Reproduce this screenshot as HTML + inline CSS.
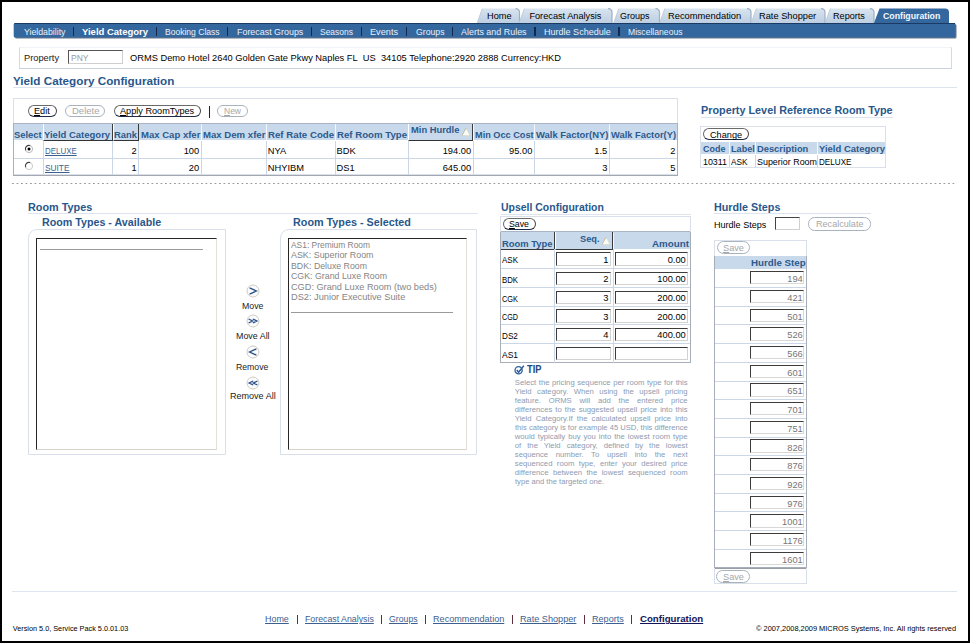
<!DOCTYPE html>
<html><head><meta charset="utf-8"><style>
html,body{margin:0;padding:0;width:970px;height:643px;overflow:hidden;background:#fff}
body{position:relative;font-family:"Liberation Sans",sans-serif}
.r{position:absolute}
.t{position:absolute;white-space:nowrap;transform-origin:0 0;}
</style></head><body>
<div class="r" style="left:0;top:0;width:970px;height:643px;background:#fff"></div>
<svg class="r" style="left:0;top:0" width="970" height="42" viewBox="0 0 970 42"><defs><linearGradient id="tg" x1="0" y1="0" x2="0" y2="1"><stop offset="0" stop-color="#d8e4f0"/><stop offset="1" stop-color="#bccee1"/></linearGradient></defs><path d="M477 23.5 L482.3 8.6 L515.5 8.6 Q519.5 8.6 519.5 12.6 L519.5 23.5 Z" fill="url(#tg)"/><path d="M515.5 8.6 Q519.5 8.6 519.5 12.6 L519.5 23.5" fill="none" stroke="#9fb0c2" stroke-width="1.2"/><path d="M477 23.5 L482.3 8.6" fill="none" stroke="#b6c5d5" stroke-width="0.8"/><path d="M519 23.5 L524.3 8.6 L608 8.6 Q612 8.6 612 12.6 L612 23.5 Z" fill="url(#tg)"/><path d="M608 8.6 Q612 8.6 612 12.6 L612 23.5" fill="none" stroke="#9fb0c2" stroke-width="1.2"/><path d="M519 23.5 L524.3 8.6" fill="none" stroke="#b6c5d5" stroke-width="0.8"/><path d="M613.5 23.5 L618.8 8.6 L655.5 8.6 Q659.5 8.6 659.5 12.6 L659.5 23.5 Z" fill="url(#tg)"/><path d="M655.5 8.6 Q659.5 8.6 659.5 12.6 L659.5 23.5" fill="none" stroke="#9fb0c2" stroke-width="1.2"/><path d="M613.5 23.5 L618.8 8.6" fill="none" stroke="#b6c5d5" stroke-width="0.8"/><path d="M659.5 23.5 L664.8 8.6 L747 8.6 Q751 8.6 751 12.6 L751 23.5 Z" fill="url(#tg)"/><path d="M747 8.6 Q751 8.6 751 12.6 L751 23.5" fill="none" stroke="#9fb0c2" stroke-width="1.2"/><path d="M659.5 23.5 L664.8 8.6" fill="none" stroke="#b6c5d5" stroke-width="0.8"/><path d="M751 23.5 L756.3 8.6 L821 8.6 Q825 8.6 825 12.6 L825 23.5 Z" fill="url(#tg)"/><path d="M821 8.6 Q825 8.6 825 12.6 L825 23.5" fill="none" stroke="#9fb0c2" stroke-width="1.2"/><path d="M751 23.5 L756.3 8.6" fill="none" stroke="#b6c5d5" stroke-width="0.8"/><path d="M825 23.5 L830.3 8.6 L870 8.6 Q874 8.6 874 12.6 L874 23.5 Z" fill="url(#tg)"/><path d="M870 8.6 Q874 8.6 874 12.6 L874 23.5" fill="none" stroke="#9fb0c2" stroke-width="1.2"/><path d="M825 23.5 L830.3 8.6" fill="none" stroke="#b6c5d5" stroke-width="0.8"/><path d="M874 23 L879.5 8.6 L945 8.6 Q949 8.6 949 12.6 L949 23 Z" fill="#35679f"/><rect x="15" y="24.2" width="941.5" height="14.3" rx="1.5" fill="#6a7688"/><rect x="13.7" y="23" width="941.8" height="14.6" rx="1.5" fill="#35679f"/><rect x="14.5" y="23" width="940.5" height="1" fill="#1b3a63"/></svg>
<div class="t" style="left:486.70px;top:11px;font-size:9.2px;line-height:10px;color:#000;transform:scale(1.0034,1.0);transform-origin:0 8px;">Home</div>
<div class="t" style="left:529.40px;top:11px;font-size:9.2px;line-height:10px;color:#000;">Forecast Analysis</div>
<div class="t" style="left:620.30px;top:11px;font-size:9.2px;line-height:10px;color:#000;transform:scale(0.9821,1.0);transform-origin:0 8px;">Groups</div>
<div class="t" style="left:667.80px;top:11px;font-size:9.2px;line-height:10px;color:#000;transform:scale(1.0164,1.0);transform-origin:0 8px;">Recommendation</div>
<div class="t" style="left:758.70px;top:11px;font-size:9.2px;line-height:10px;color:#000;transform:scale(1.0088,1.0);transform-origin:0 8px;">Rate Shopper</div>
<div class="t" style="left:833.30px;top:11px;font-size:9.2px;line-height:10px;color:#000;transform:scale(0.9915,1.0);transform-origin:0 8px;">Reports</div>
<div class="t" style="left:882.90px;top:11px;font-size:8.74px;line-height:10px;color:#f4f8ff;font-weight:bold;transform:scale(1.0009,1.0);transform-origin:0 8px;">Configuration</div>
<div class="t" style="left:23.60px;top:27px;font-size:9.3px;line-height:10px;color:#e9f0f8;transform:scale(0.9408,1.0);transform-origin:0 8px;">Yieldability</div>
<div class="t" style="left:81.80px;top:27px;font-size:9.3px;line-height:10px;color:#ffffff;font-weight:bold;transform:scale(1.0206,1.0);transform-origin:0 8px;">Yield Category</div>
<div class="t" style="left:165.40px;top:27px;font-size:9.3px;line-height:10px;color:#e9f0f8;transform:scale(0.9186,1.0);transform-origin:0 8px;">Booking Class</div>
<div class="t" style="left:236.70px;top:27px;font-size:9.3px;line-height:10px;color:#e9f0f8;transform:scale(0.9574,1.0);transform-origin:0 8px;">Forecast Groups</div>
<div class="t" style="left:320.30px;top:27px;font-size:9.3px;line-height:10px;color:#e9f0f8;transform:scale(0.9119,1.0);transform-origin:0 8px;">Seasons</div>
<div class="t" style="left:370.30px;top:27px;font-size:9.3px;line-height:10px;color:#e9f0f8;transform:scale(0.9852,1.0);transform-origin:0 8px;">Events</div>
<div class="t" style="left:415.60px;top:27px;font-size:9.3px;line-height:10px;color:#e9f0f8;transform:scale(0.9344,1.0);transform-origin:0 8px;">Groups</div>
<div class="t" style="left:461.10px;top:27px;font-size:9.3px;line-height:10px;color:#e9f0f8;transform:scale(0.9616,1.0);transform-origin:0 8px;">Alerts and Rules</div>
<div class="t" style="left:543.60px;top:27px;font-size:9.3px;line-height:10px;color:#e9f0f8;transform:scale(0.9716,1.0);transform-origin:0 8px;">Hurdle Schedule</div>
<div class="t" style="left:627.50px;top:27px;font-size:9.3px;line-height:10px;color:#e9f0f8;transform:scale(0.9250,1.0);transform-origin:0 8px;">Miscellaneous</div>
<div class="r" style="left:73.00px;top:27.30px;width:1.30px;height:8.80px;background:#13284a"></div>
<div class="r" style="left:156.20px;top:27.30px;width:1.30px;height:8.80px;background:#13284a"></div>
<div class="r" style="left:227.20px;top:27.30px;width:1.30px;height:8.80px;background:#13284a"></div>
<div class="r" style="left:311.10px;top:27.30px;width:1.30px;height:8.80px;background:#13284a"></div>
<div class="r" style="left:361.10px;top:27.30px;width:1.30px;height:8.80px;background:#13284a"></div>
<div class="r" style="left:406.10px;top:27.30px;width:1.30px;height:8.80px;background:#13284a"></div>
<div class="r" style="left:452.10px;top:27.30px;width:1.30px;height:8.80px;background:#13284a"></div>
<div class="r" style="left:534.30px;top:27.30px;width:1.30px;height:8.80px;background:#13284a"></div>
<div class="r" style="left:618.40px;top:27.30px;width:1.30px;height:8.80px;background:#13284a"></div>
<div class="r" style="left:18.50px;top:47.00px;width:933.00px;height:21.80px;border:1px solid #f0f3f7;border-left-color:#d3dae4;border-bottom-color:#cbd3df;border-right-color:#d3dae4;box-sizing:border-box"></div>
<div class="t" style="left:23.80px;top:53px;font-size:9.3px;line-height:10px;color:#222;transform:scale(0.9988,1.0);transform-origin:0 8px;">Property</div>
<div class="r" style="left:68.30px;top:50.30px;width:54.30px;height:13.40px;border:1px solid #cfcfcf;border-top:1.5px solid #555;border-left:1.5px solid #555;box-sizing:border-box;background:#fff"></div>
<div class="t" style="left:70.50px;top:53px;font-size:9.3px;line-height:10px;color:#9c9c9c;transform:scale(0.9150,1.0);transform-origin:0 8px;">PNY</div>
<div class="t" style="left:130.00px;top:53px;font-size:9.3px;line-height:10px;color:#000;transform:scale(0.9992,1.0);transform-origin:0 8px;">ORMS Demo Hotel 2640 Golden Gate Pkwy Naples FL&nbsp; US&nbsp; 34105 Telephone:2920 2888 Currency:HKD</div>
<div class="t" style="left:13.40px;top:75px;font-size:10.8px;line-height:12px;color:#29578b;font-weight:bold;transform:scale(1.0834,1.0);transform-origin:0 10px;">Yield Category Configuration</div>
<div class="r" style="left:13.00px;top:87.00px;width:944.00px;height:1.00px;background:#dde4ee"></div>
<div class="r" style="left:12.60px;top:98.30px;width:665.20px;height:77.20px;border:1px solid #d9e0ea;box-sizing:border-box"></div>
<div class="r" style="left:27.60px;top:104.50px;width:29.00px;height:12.30px;border:1px solid #6a6a6a;border-bottom:1.6px solid #1f2a44;border-right:1.1px solid #444;background:#fff;border-radius:6.1px;box-sizing:border-box"></div>
<div class="t" style="left:34.20px;top:106px;font-size:9.3px;line-height:10px;color:#000;transform:scale(0.9856,1.0);transform-origin:0 8px;"><u>E</u>dit</div>
<div class="r" style="left:65.20px;top:104.50px;width:40.30px;height:12.30px;border:1px solid #a9b3be;background:#fff;border-radius:6.1px;box-sizing:border-box"></div>
<div class="t" style="left:71.50px;top:106px;font-size:9.3px;line-height:10px;color:#a7a7a7;transform:scale(1.0233,1.0);transform-origin:0 8px;">Delete</div>
<div class="r" style="left:114.20px;top:104.60px;width:87.30px;height:12.60px;border:1px solid #6a6a6a;border-bottom:1.6px solid #1f2a44;border-right:1.1px solid #444;background:#fff;border-radius:6.3px;box-sizing:border-box"></div>
<div class="t" style="left:120.00px;top:106px;font-size:9.3px;line-height:10px;color:#000;transform:scale(0.9834,1.0);transform-origin:0 8px;"><u>A</u>pply RoomTypes</div>
<div class="r" style="left:208.70px;top:106.00px;width:1.10px;height:11.50px;background:#222"></div>
<div class="r" style="left:216.90px;top:104.50px;width:31.10px;height:12.30px;border:1px solid #a9b3be;background:#fff;border-radius:6.1px;box-sizing:border-box"></div>
<div class="t" style="left:224.00px;top:106px;font-size:9.3px;line-height:10px;color:#a7a7a7;transform:scale(0.9135,1.0);transform-origin:0 8px;"><u>N</u>ew</div>
<div class="r" style="left:12.60px;top:123.30px;width:665.20px;height:17.20px;background:#c9d9ec;border-top:1px solid #a9b5c5;box-sizing:border-box"></div>
<div class="r" style="left:42.50px;top:124.30px;width:1.00px;height:16.20px;background:#f4f7fb"></div>
<div class="r" style="left:111.90px;top:124.30px;width:1.00px;height:16.20px;background:#f4f7fb"></div>
<div class="r" style="left:138.40px;top:124.30px;width:1.00px;height:16.20px;background:#f4f7fb"></div>
<div class="r" style="left:201.00px;top:124.30px;width:1.00px;height:16.20px;background:#f4f7fb"></div>
<div class="r" style="left:265.80px;top:124.30px;width:1.00px;height:16.20px;background:#f4f7fb"></div>
<div class="r" style="left:334.50px;top:124.30px;width:1.00px;height:16.20px;background:#f4f7fb"></div>
<div class="r" style="left:407.50px;top:124.30px;width:1.00px;height:16.20px;background:#f4f7fb"></div>
<div class="r" style="left:473.10px;top:124.30px;width:1.00px;height:16.20px;background:#f4f7fb"></div>
<div class="r" style="left:533.70px;top:124.30px;width:1.00px;height:16.20px;background:#f4f7fb"></div>
<div class="r" style="left:608.60px;top:124.30px;width:1.00px;height:16.20px;background:#f4f7fb"></div>
<div class="r" style="left:43.00px;top:124.10px;width:69.60px;height:17.10px;border-right:1.3px solid #3a3a3a;border-bottom:1.2px solid #333;border-left:1px solid #fff;box-sizing:border-box"></div>
<div class="r" style="left:112.60px;top:124.10px;width:26.30px;height:17.10px;border-right:1.3px solid #3a3a3a;border-bottom:1.2px solid #333;border-left:1px solid #fff;box-sizing:border-box"></div>
<div class="r" style="left:408.00px;top:124.10px;width:65.40px;height:17.10px;border-right:1.3px solid #3a3a3a;border-bottom:1.2px solid #333;border-left:1px solid #fff;box-sizing:border-box"></div>
<div class="t" style="left:14.00px;top:129px;font-size:9.4px;line-height:11px;color:#2c5a8c;font-weight:bold;transform:scale(1.0027,1.0);transform-origin:0 9px;">Select</div>
<div class="t" style="left:44.30px;top:129px;font-size:9.4px;line-height:11px;color:#2c5a8c;font-weight:bold;transform:scale(1.0123,1.0);transform-origin:0 9px;">Yield Category</div>
<div class="t" style="left:114.10px;top:129px;font-size:9.4px;line-height:11px;color:#2c5a8c;font-weight:bold;transform:scale(1.0027,1.0);transform-origin:0 9px;">Rank</div>
<div class="t" style="left:140.80px;top:129px;font-size:9.4px;line-height:11px;color:#2c5a8c;font-weight:bold;transform:scale(1.0178,1.0);transform-origin:0 9px;">Max Cap xfer</div>
<div class="t" style="left:202.70px;top:129px;font-size:9.4px;line-height:11px;color:#2c5a8c;font-weight:bold;transform:scale(1.0235,1.0);transform-origin:0 9px;">Max Dem xfer</div>
<div class="t" style="left:267.80px;top:129px;font-size:9.4px;line-height:11px;color:#2c5a8c;font-weight:bold;transform:scale(1.0316,1.0);transform-origin:0 9px;">Ref Rate Code</div>
<div class="t" style="left:336.70px;top:129px;font-size:9.4px;line-height:11px;color:#2c5a8c;font-weight:bold;transform:scale(1.0299,1.0);transform-origin:0 9px;">Ref Room Type</div>
<div class="t" style="left:474.80px;top:129px;font-size:9.4px;line-height:11px;color:#2c5a8c;font-weight:bold;transform:scale(0.9782,1.0);transform-origin:0 9px;">Min Occ Cost</div>
<div class="t" style="left:536.00px;top:129px;font-size:9.4px;line-height:11px;color:#2c5a8c;font-weight:bold;transform:scale(1.0047,1.0);transform-origin:0 9px;">Walk Factor(NY)</div>
<div class="t" style="left:611.00px;top:129px;font-size:9.4px;line-height:11px;color:#2c5a8c;font-weight:bold;transform:scale(0.9955,1.0);transform-origin:0 9px;">Walk Factor(Y)</div>
<div class="t" style="left:410.80px;top:124px;font-size:9.4px;line-height:11px;color:#2c5a8c;font-weight:bold;transform:scale(0.9992,1.0);transform-origin:0 9px;">Min Hurdle</div>
<svg class="r" style="left:461.3px;top:127.2px" width="10" height="10" viewBox="0 0 10 10"><path d="M1 8.5 L5 1 L9 8.5 Z" fill="#fbfcf8" stroke="#d9dccb" stroke-width="0.8"/><path d="M1 8.5 L5 1" stroke="#b4b8a6" stroke-width="0.8"/></svg>
<div class="r" style="left:12.60px;top:157.90px;width:665.20px;height:1.00px;background:#cbd6e6"></div>
<div class="r" style="left:12.60px;top:174.70px;width:665.20px;height:1.00px;background:#cbd6e6"></div>
<div class="r" style="left:42.50px;top:140.50px;width:1.00px;height:34.60px;background:#cbd6e6"></div>
<div class="r" style="left:111.90px;top:140.50px;width:1.00px;height:34.60px;background:#cbd6e6"></div>
<div class="r" style="left:138.40px;top:140.50px;width:1.00px;height:34.60px;background:#cbd6e6"></div>
<div class="r" style="left:201.00px;top:140.50px;width:1.00px;height:34.60px;background:#cbd6e6"></div>
<div class="r" style="left:265.80px;top:140.50px;width:1.00px;height:34.60px;background:#cbd6e6"></div>
<div class="r" style="left:334.50px;top:140.50px;width:1.00px;height:34.60px;background:#cbd6e6"></div>
<div class="r" style="left:407.50px;top:140.50px;width:1.00px;height:34.60px;background:#cbd6e6"></div>
<div class="r" style="left:473.10px;top:140.50px;width:1.00px;height:34.60px;background:#cbd6e6"></div>
<div class="r" style="left:533.70px;top:140.50px;width:1.00px;height:34.60px;background:#cbd6e6"></div>
<div class="r" style="left:608.60px;top:140.50px;width:1.00px;height:34.60px;background:#cbd6e6"></div>
<div class="r" style="left:12.60px;top:123.30px;width:1.00px;height:52.30px;background:#a9b1bd"></div>
<div class="r" style="left:676.80px;top:123.30px;width:1.00px;height:52.30px;background:#a9b1bd"></div>
<div class="r" style="left:12.60px;top:174.70px;width:665.20px;height:1.00px;background:#a3a8b0"></div>
<svg class="r" style="left:23.5px;top:144.2px" width="10" height="10" viewBox="0 0 10 10"><circle cx="5" cy="5" r="3.6" fill="#fff" stroke="#b0b0b0" stroke-width="0.9"/><path d="M1.6 6.2 A3.6 3.6 0 0 1 6.2 1.6" stroke="#444" stroke-width="1.1" fill="none"/><circle cx="5" cy="5" r="1.5" fill="#000"/></svg>
<div class="t" style="left:45.00px;top:146px;font-size:9.3px;line-height:10px;color:#3d5f8f;text-decoration:underline;transform:scale(0.8521,1.0);transform-origin:0 8px;">DELUXE</div>
<div class="t" style="left:136.60px;top:146px;font-size:9.3px;line-height:10px;color:#000;margin-left:-5.17px;">2</div>
<div class="t" style="left:199.20px;top:146px;font-size:9.3px;line-height:10px;color:#000;margin-left:-15.52px;">100</div>
<div class="t" style="left:267.80px;top:146px;font-size:9.3px;line-height:10px;color:#000;">NYA</div>
<div class="t" style="left:336.50px;top:146px;font-size:9.3px;line-height:10px;color:#000;">BDK</div>
<div class="t" style="left:471.10px;top:146px;font-size:9.3px;line-height:10px;color:#000;margin-left:-28.44px;">194.00</div>
<div class="t" style="left:532.30px;top:146px;font-size:9.3px;line-height:10px;color:#000;margin-left:-23.27px;">95.00</div>
<div class="t" style="left:607.30px;top:146px;font-size:9.3px;line-height:10px;color:#000;margin-left:-12.94px;">1.5</div>
<div class="t" style="left:675.30px;top:146px;font-size:9.3px;line-height:10px;color:#000;margin-left:-5.17px;">2</div>
<svg class="r" style="left:23.5px;top:161.2px" width="10" height="10" viewBox="0 0 10 10"><circle cx="5" cy="5" r="3.6" fill="#fff" stroke="#c4c4c4" stroke-width="0.9"/><path d="M1.6 6.2 A3.6 3.6 0 0 1 6.2 1.6" stroke="#444" stroke-width="1.1" fill="none"/></svg>
<div class="t" style="left:45.00px;top:163px;font-size:9.3px;line-height:10px;color:#3d5f8f;text-decoration:underline;transform:scale(0.8945,1.0);transform-origin:0 8px;">SUITE</div>
<div class="t" style="left:136.60px;top:163px;font-size:9.3px;line-height:10px;color:#000;margin-left:-5.17px;">1</div>
<div class="t" style="left:199.20px;top:163px;font-size:9.3px;line-height:10px;color:#000;margin-left:-10.34px;">20</div>
<div class="t" style="left:267.80px;top:163px;font-size:9.3px;line-height:10px;color:#000;">NHYIBM</div>
<div class="t" style="left:336.50px;top:163px;font-size:9.3px;line-height:10px;color:#000;">DS1</div>
<div class="t" style="left:471.10px;top:163px;font-size:9.3px;line-height:10px;color:#000;margin-left:-28.44px;">645.00</div>
<div class="t" style="left:607.30px;top:163px;font-size:9.3px;line-height:10px;color:#000;margin-left:-5.17px;">3</div>
<div class="t" style="left:675.30px;top:163px;font-size:9.3px;line-height:10px;color:#000;margin-left:-5.17px;">5</div>
<div class="t" style="left:700.80px;top:104px;font-size:10.8px;line-height:12px;color:#29578b;font-weight:bold;transform:scale(1.0020,1.0);transform-origin:0 10px;">Property Level Reference Room Type</div>
<div class="r" style="left:700.50px;top:116.50px;width:192.00px;height:1.00px;background:#dde4ee"></div>
<div class="r" style="left:700.40px;top:126.40px;width:185.60px;height:41.20px;border:1px solid #d9e0ea;box-sizing:border-box"></div>
<div class="r" style="left:703.00px;top:127.90px;width:45.90px;height:12.60px;border:1px solid #6a6a6a;border-bottom:1.6px solid #1f2a44;border-right:1.1px solid #444;background:#fff;border-radius:6.3px;box-sizing:border-box"></div>
<div class="t" style="left:709.90px;top:130px;font-size:9.3px;line-height:10px;color:#000;transform:scale(0.9853,1.0);transform-origin:0 8px;">Change</div>
<div class="r" style="left:701.40px;top:142.20px;width:183.60px;height:12.30px;background:#c9d9ec"></div>
<div class="r" style="left:728.50px;top:142.20px;width:1.00px;height:12.30px;background:#f4f7fb"></div>
<div class="r" style="left:728.50px;top:154.50px;width:1.00px;height:12.60px;background:#cbd6e6"></div>
<div class="r" style="left:754.90px;top:142.20px;width:1.00px;height:12.30px;background:#f4f7fb"></div>
<div class="r" style="left:754.90px;top:154.50px;width:1.00px;height:12.60px;background:#cbd6e6"></div>
<div class="r" style="left:816.80px;top:142.20px;width:1.00px;height:12.30px;background:#f4f7fb"></div>
<div class="r" style="left:816.80px;top:154.50px;width:1.00px;height:12.60px;background:#cbd6e6"></div>
<div class="t" style="left:702.60px;top:143px;font-size:9.4px;line-height:11px;color:#2c5a8c;font-weight:bold;transform:scale(0.9557,1.0);transform-origin:0 9px;">Code</div>
<div class="t" style="left:730.70px;top:143px;font-size:9.4px;line-height:11px;color:#2c5a8c;font-weight:bold;transform:scale(0.9714,1.0);transform-origin:0 9px;">Label</div>
<div class="t" style="left:756.70px;top:143px;font-size:9.4px;line-height:11px;color:#2c5a8c;font-weight:bold;transform:scale(0.9946,1.0);transform-origin:0 9px;">Description</div>
<div class="t" style="left:818.80px;top:143px;font-size:9.4px;line-height:11px;color:#2c5a8c;font-weight:bold;transform:scale(1.0108,1.0);transform-origin:0 9px;">Yield Category</div>
<div class="t" style="left:702.60px;top:157px;font-size:9.3px;line-height:10px;color:#000;transform:scale(0.9534,1.0);transform-origin:0 8px;">10311</div>
<div class="t" style="left:730.70px;top:157px;font-size:9.3px;line-height:10px;color:#000;transform:scale(0.8866,1.0);transform-origin:0 8px;">ASK</div>
<div class="t" style="left:756.70px;top:157px;font-size:9.3px;line-height:10px;color:#000;transform:scale(0.9595,1.0);transform-origin:0 8px;">Superior Room</div>
<div class="t" style="left:818.80px;top:157px;font-size:9.3px;line-height:10px;color:#000;transform:scale(0.8736,1.0);transform-origin:0 8px;">DELUXE</div>
<div class="r" style="left:12.00px;top:183.00px;width:945.00px;height:1.20px;background-image:linear-gradient(to right,#9c9c9c 0 1.4px,transparent 1.4px);background-size:4.5px 1.2px"></div>
<div class="t" style="left:27.90px;top:201px;font-size:10.8px;line-height:12px;color:#29578b;font-weight:bold;transform:scale(1.0031,1.0);transform-origin:0 10px;">Room Types</div>
<div class="r" style="left:28.00px;top:213.20px;width:449.50px;height:1.00px;background:#dde4ee"></div>
<div class="t" style="left:41.50px;top:216px;font-size:10.8px;line-height:12px;color:#29578b;font-weight:bold;transform:scale(0.9908,1.0);transform-origin:0 10px;">Room Types - Available</div>
<div class="t" style="left:292.70px;top:216px;font-size:10.8px;line-height:12px;color:#29578b;font-weight:bold;transform:scale(0.9992,1.0);transform-origin:0 10px;">Room Types - Selected</div>
<div class="r" style="left:28.00px;top:229.20px;width:197.90px;height:226.00px;border:1px solid #d9e0ea;border-top-left-radius:9px;box-sizing:border-box"></div>
<div class="r" style="left:280.00px;top:229.20px;width:196.80px;height:226.00px;border:1px solid #d9e0ea;border-top-left-radius:9px;box-sizing:border-box"></div>
<div class="r" style="left:36.30px;top:237.80px;width:181.00px;height:212.10px;border:1.5px solid;border-color:#262626 #e2e0d8 #d6d3ca #262626;background:#fff;box-sizing:border-box"></div>
<div class="r" style="left:288.10px;top:237.80px;width:179.20px;height:212.10px;border:1.5px solid;border-color:#262626 #e2e0d8 #d6d3ca #262626;background:#fff;box-sizing:border-box"></div>
<div class="r" style="left:40.00px;top:249.00px;width:162.50px;height:1.20px;background:#9a9a9a"></div>
<div class="t" style="left:291.10px;top:240px;font-size:9.2px;line-height:10px;color:#858585;transform:scale(0.9154,1.0);transform-origin:0 8px;">AS1: Premium Room</div>
<div class="t" style="left:291.10px;top:250px;font-size:9.2px;line-height:10px;color:#858585;transform:scale(0.9674,1.0);transform-origin:0 8px;">ASK: Superior Room</div>
<div class="t" style="left:291.10px;top:261px;font-size:9.2px;line-height:10px;color:#858585;transform:scale(0.9541,1.0);transform-origin:0 8px;">BDK: Deluxe Room</div>
<div class="t" style="left:291.10px;top:271px;font-size:9.2px;line-height:10px;color:#858585;transform:scale(0.9591,1.0);transform-origin:0 8px;">CGK: Grand Luxe Room</div>
<div class="t" style="left:291.10px;top:282px;font-size:9.2px;line-height:10px;color:#858585;transform:scale(0.9983,1.0);transform-origin:0 8px;">CGD: Grand Luxe Room (two beds)</div>
<div class="t" style="left:291.10px;top:292px;font-size:9.2px;line-height:10px;color:#858585;transform:scale(1.0036,1.0);transform-origin:0 8px;">DS2: Junior Executive Suite</div>
<div class="r" style="left:290.90px;top:311.60px;width:162.30px;height:1.20px;background:#9a9a9a"></div>
<svg class="r" style="left:245.6px;top:283.8px" width="14" height="14" viewBox="0 0 14 14"><circle cx="7" cy="7" r="6" fill="#f9fbfd" stroke="#c9c7b6" stroke-width="0.9"/><path d="M3.6 3.9 L10.4 7 L3.6 10.1" fill="none" stroke="#2b4f86" stroke-width="1.35"/></svg>
<div class="t" style="left:241.90px;top:301px;font-size:9.2px;line-height:10px;color:#222;transform:scale(0.9524,1.05);transform-origin:0 8px;">Move</div>
<svg class="r" style="left:245.6px;top:314.2px" width="14" height="14" viewBox="0 0 14 14"><circle cx="7" cy="7" r="6" fill="#f9fbfd" stroke="#c9c7b6" stroke-width="0.9"/><path d="M2.6 5 L6.6 7 L2.6 9 M6.8 5 L10.8 7 L6.8 9" fill="none" stroke="#2b4f86" stroke-width="1.35"/></svg>
<div class="t" style="left:235.80px;top:331px;font-size:9.2px;line-height:10px;color:#222;transform:scale(0.9673,1.05);transform-origin:0 8px;">Move All</div>
<svg class="r" style="left:245.6px;top:345.3px" width="14" height="14" viewBox="0 0 14 14"><circle cx="7" cy="7" r="6" fill="#f9fbfd" stroke="#c9c7b6" stroke-width="0.9"/><path d="M10.4 3.9 L3.6 7 L10.4 10.1" fill="none" stroke="#2b4f86" stroke-width="1.35"/></svg>
<div class="t" style="left:236.45px;top:362px;font-size:9.2px;line-height:10px;color:#222;transform:scale(0.9439,1.05);transform-origin:0 8px;">Remove</div>
<svg class="r" style="left:245.6px;top:376.2px" width="14" height="14" viewBox="0 0 14 14"><circle cx="7" cy="7" r="6" fill="#f9fbfd" stroke="#c9c7b6" stroke-width="0.9"/><path d="M11.4 5 L7.4 7 L11.4 9 M7.2 5 L3.2 7 L7.2 9" fill="none" stroke="#2b4f86" stroke-width="1.35"/></svg>
<div class="t" style="left:229.75px;top:391px;font-size:9.2px;line-height:10px;color:#222;transform:scale(0.9835,1.05);transform-origin:0 8px;">Remove All</div>
<div class="t" style="left:500.80px;top:201px;font-size:10.8px;line-height:12px;color:#29578b;font-weight:bold;transform:scale(0.9692,1.0);transform-origin:0 10px;">Upsell Configuration</div>
<div class="r" style="left:500.50px;top:213.60px;width:190.00px;height:1.00px;background:#dde4ee"></div>
<div class="r" style="left:500.40px;top:216.20px;width:190.20px;height:146.40px;border:1px solid #d9e0ea;box-sizing:border-box"></div>
<div class="r" style="left:500.40px;top:231.80px;width:190.20px;height:130.80px;border:1px solid #a6aeba;border-top:none;box-sizing:border-box"></div>
<div class="r" style="left:502.60px;top:217.70px;width:33.30px;height:12.40px;border:1px solid #6a6a6a;border-bottom:1.6px solid #1f2a44;border-right:1.1px solid #444;background:#fff;border-radius:6.2px;box-sizing:border-box"></div>
<div class="t" style="left:509.00px;top:219px;font-size:9.3px;line-height:10px;color:#000;transform:scale(0.9433,1.0);transform-origin:0 8px;"><u>S</u>ave</div>
<div class="r" style="left:501.40px;top:231.40px;width:188.20px;height:18.00px;background:#c9d9ec;border-top:1px solid #a9b5c5;box-sizing:border-box"></div>
<div class="r" style="left:554.20px;top:232.80px;width:1.00px;height:16.30px;background:#f4f7fb"></div>
<div class="r" style="left:613.00px;top:232.80px;width:1.00px;height:16.30px;background:#f4f7fb"></div>
<div class="r" style="left:501.40px;top:232.40px;width:53.40px;height:17.40px;border-right:1.3px solid #3a3a3a;border-bottom:1.3px solid #3a3a3a;box-sizing:border-box"></div>
<div class="r" style="left:554.80px;top:232.40px;width:58.60px;height:17.40px;border-right:1.3px solid #3a3a3a;border-bottom:1.3px solid #3a3a3a;border-left:1px solid #fff;box-sizing:border-box"></div>
<div class="t" style="left:502.00px;top:238px;font-size:9.4px;line-height:11px;color:#2c5a8c;font-weight:bold;transform:scale(1.0028,1.0);transform-origin:0 9px;">Room Type</div>
<div class="t" style="left:579.80px;top:233px;font-size:9.4px;line-height:11px;color:#2c5a8c;font-weight:bold;transform:scale(0.9842,1.0);transform-origin:0 9px;">Seq.</div>
<svg class="r" style="left:600.5px;top:235.5px" width="10" height="10" viewBox="0 0 10 10"><path d="M1 8.5 L5 1 L9 8.5 Z" fill="#fbfcf8" stroke="#d9dccb" stroke-width="0.8"/><path d="M1 8.5 L5 1" stroke="#b4b8a6" stroke-width="0.8"/></svg>
<div class="t" style="left:652.20px;top:238px;font-size:9.4px;line-height:11px;color:#2c5a8c;font-weight:bold;transform:scale(1.0446,1.0);transform-origin:0 9px;">Amount</div>
<div class="r" style="left:501.40px;top:268.00px;width:188.20px;height:1.00px;background:#cbd6e6"></div>
<div class="r" style="left:554.20px;top:249.10px;width:1.00px;height:19.40px;background:#cbd6e6"></div>
<div class="r" style="left:613.00px;top:249.10px;width:1.00px;height:19.40px;background:#cbd6e6"></div>
<div class="t" style="left:501.90px;top:255px;font-size:9.3px;line-height:10px;color:#000;transform:scale(0.8598,1.0);transform-origin:0 8px;">ASK</div>
<div class="r" style="left:556.20px;top:252.30px;width:54.60px;height:13.50px;border:1px solid #d2d2d2;border-top:1.6px solid #3c3c3c;border-left:1.6px solid #3c3c3c;box-sizing:border-box;background:#fff"></div>
<div class="t" style="left:608.50px;top:255px;font-size:9.3px;line-height:10px;color:#000;margin-left:-5.17px;">1</div>
<div class="r" style="left:614.90px;top:252.30px;width:73.20px;height:13.50px;border:1px solid #d2d2d2;border-top:1.6px solid #3c3c3c;border-left:1.6px solid #3c3c3c;box-sizing:border-box;background:#fff"></div>
<div class="t" style="left:685.80px;top:255px;font-size:9.3px;line-height:10px;color:#000;margin-left:-18.11px;">0.00</div>
<div class="r" style="left:501.40px;top:287.00px;width:188.20px;height:1.00px;background:#cbd6e6"></div>
<div class="r" style="left:554.20px;top:268.50px;width:1.00px;height:19.00px;background:#cbd6e6"></div>
<div class="r" style="left:613.00px;top:268.50px;width:1.00px;height:19.00px;background:#cbd6e6"></div>
<div class="t" style="left:501.90px;top:275px;font-size:9.3px;line-height:10px;color:#000;transform:scale(0.8366,1.0);transform-origin:0 8px;">BDK</div>
<div class="r" style="left:556.20px;top:271.70px;width:54.60px;height:13.50px;border:1px solid #d2d2d2;border-top:1.6px solid #3c3c3c;border-left:1.6px solid #3c3c3c;box-sizing:border-box;background:#fff"></div>
<div class="t" style="left:608.50px;top:274px;font-size:9.3px;line-height:10px;color:#000;margin-left:-5.17px;">2</div>
<div class="r" style="left:614.90px;top:271.70px;width:73.20px;height:13.50px;border:1px solid #d2d2d2;border-top:1.6px solid #3c3c3c;border-left:1.6px solid #3c3c3c;box-sizing:border-box;background:#fff"></div>
<div class="t" style="left:685.80px;top:274px;font-size:9.3px;line-height:10px;color:#000;margin-left:-28.44px;">100.00</div>
<div class="r" style="left:501.40px;top:305.60px;width:188.20px;height:1.00px;background:#cbd6e6"></div>
<div class="r" style="left:554.20px;top:287.50px;width:1.00px;height:18.60px;background:#cbd6e6"></div>
<div class="r" style="left:613.00px;top:287.50px;width:1.00px;height:18.60px;background:#cbd6e6"></div>
<div class="t" style="left:501.90px;top:294px;font-size:9.3px;line-height:10px;color:#000;transform:scale(0.7938,1.0);transform-origin:0 8px;">CGK</div>
<div class="r" style="left:556.20px;top:290.70px;width:54.60px;height:13.50px;border:1px solid #d2d2d2;border-top:1.6px solid #3c3c3c;border-left:1.6px solid #3c3c3c;box-sizing:border-box;background:#fff"></div>
<div class="t" style="left:608.50px;top:293px;font-size:9.3px;line-height:10px;color:#000;margin-left:-5.17px;">3</div>
<div class="r" style="left:614.90px;top:290.70px;width:73.20px;height:13.50px;border:1px solid #d2d2d2;border-top:1.6px solid #3c3c3c;border-left:1.6px solid #3c3c3c;box-sizing:border-box;background:#fff"></div>
<div class="t" style="left:685.80px;top:293px;font-size:9.3px;line-height:10px;color:#000;margin-left:-28.44px;">200.00</div>
<div class="r" style="left:501.40px;top:324.00px;width:188.20px;height:1.00px;background:#cbd6e6"></div>
<div class="r" style="left:554.20px;top:306.10px;width:1.00px;height:18.40px;background:#cbd6e6"></div>
<div class="r" style="left:613.00px;top:306.10px;width:1.00px;height:18.40px;background:#cbd6e6"></div>
<div class="t" style="left:501.90px;top:312px;font-size:9.3px;line-height:10px;color:#000;transform:scale(0.7740,1.0);transform-origin:0 8px;">CGD</div>
<div class="r" style="left:556.20px;top:309.30px;width:54.60px;height:13.50px;border:1px solid #d2d2d2;border-top:1.6px solid #3c3c3c;border-left:1.6px solid #3c3c3c;box-sizing:border-box;background:#fff"></div>
<div class="t" style="left:608.50px;top:312px;font-size:9.3px;line-height:10px;color:#000;margin-left:-5.17px;">3</div>
<div class="r" style="left:614.90px;top:309.30px;width:73.20px;height:13.50px;border:1px solid #d2d2d2;border-top:1.6px solid #3c3c3c;border-left:1.6px solid #3c3c3c;box-sizing:border-box;background:#fff"></div>
<div class="t" style="left:685.80px;top:312px;font-size:9.3px;line-height:10px;color:#000;margin-left:-28.44px;">200.00</div>
<div class="r" style="left:501.40px;top:343.00px;width:188.20px;height:1.00px;background:#cbd6e6"></div>
<div class="r" style="left:554.20px;top:324.50px;width:1.00px;height:19.00px;background:#cbd6e6"></div>
<div class="r" style="left:613.00px;top:324.50px;width:1.00px;height:19.00px;background:#cbd6e6"></div>
<div class="t" style="left:501.90px;top:331px;font-size:9.3px;line-height:10px;color:#000;transform:scale(0.8788,1.0);transform-origin:0 8px;">DS2</div>
<div class="r" style="left:556.20px;top:327.70px;width:54.60px;height:13.50px;border:1px solid #d2d2d2;border-top:1.6px solid #3c3c3c;border-left:1.6px solid #3c3c3c;box-sizing:border-box;background:#fff"></div>
<div class="t" style="left:608.50px;top:330px;font-size:9.3px;line-height:10px;color:#000;margin-left:-5.17px;">4</div>
<div class="r" style="left:614.90px;top:327.70px;width:73.20px;height:13.50px;border:1px solid #d2d2d2;border-top:1.6px solid #3c3c3c;border-left:1.6px solid #3c3c3c;box-sizing:border-box;background:#fff"></div>
<div class="t" style="left:685.80px;top:330px;font-size:9.3px;line-height:10px;color:#000;margin-left:-28.44px;">400.00</div>
<div class="r" style="left:554.20px;top:343.50px;width:1.00px;height:19.00px;background:#cbd6e6"></div>
<div class="r" style="left:613.00px;top:343.50px;width:1.00px;height:19.00px;background:#cbd6e6"></div>
<div class="t" style="left:501.90px;top:350px;font-size:9.3px;line-height:10px;color:#000;transform:scale(0.9102,1.0);transform-origin:0 8px;">AS1</div>
<div class="r" style="left:556.20px;top:346.70px;width:54.60px;height:13.50px;border:1px solid #d2d2d2;border-top:1.6px solid #3c3c3c;border-left:1.6px solid #3c3c3c;box-sizing:border-box;background:#fff"></div>
<div class="r" style="left:614.90px;top:346.70px;width:73.20px;height:13.50px;border:1px solid #d2d2d2;border-top:1.6px solid #3c3c3c;border-left:1.6px solid #3c3c3c;box-sizing:border-box;background:#fff"></div>
<svg class="r" style="left:514px;top:364.5px" width="11" height="10" viewBox="0 0 11 10"><circle cx="4.6" cy="5.2" r="3.6" fill="none" stroke="#2f5f9a" stroke-width="1.3"/><path d="M2.8 5 L4.6 7.2 L9.8 0.8" fill="none" stroke="#2f5f9a" stroke-width="1.5"/></svg>
<div class="t" style="left:526.60px;top:364px;font-size:10.0px;line-height:11px;color:#224878;font-weight:bold;transform:scale(0.9253,1.0);transform-origin:0 9px;">TIP</div>
<div class="t" style="left:514.80px;top:378px;font-size:7.7px;line-height:9px;color:#8d9bb0;word-spacing:0.448px;">Select the pricing sequence per room type for this</div>
<div class="t" style="left:514.80px;top:387px;font-size:7.7px;line-height:9px;color:#8d9bb0;word-spacing:3.373px;">Yield category. When using the upsell pricing</div>
<div class="t" style="left:514.80px;top:396px;font-size:7.7px;line-height:9px;color:#8d9bb0;word-spacing:5.654px;">feature. ORMS will add the entered price</div>
<div class="t" style="left:514.80px;top:405px;font-size:7.7px;line-height:9px;color:#8d9bb0;word-spacing:0.956px;">differences to the suggested upsell price into this</div>
<div class="t" style="left:514.80px;top:414px;font-size:7.7px;line-height:9px;color:#8d9bb0;word-spacing:1.948px;">Yield Category.If the calculated upsell price into</div>
<div class="t" style="left:514.80px;top:423px;font-size:7.7px;line-height:9px;color:#8d9bb0;transform:scale(0.9895,1.0);transform-origin:0 7px;">this category is for example 45 USD, this difference</div>
<div class="t" style="left:514.80px;top:432px;font-size:7.7px;line-height:9px;color:#8d9bb0;word-spacing:0.821px;">would typically buy you into the lowest room type</div>
<div class="t" style="left:514.80px;top:441px;font-size:7.7px;line-height:9px;color:#8d9bb0;word-spacing:3.887px;">of the Yield category, defined by the lowest</div>
<div class="t" style="left:514.80px;top:450px;font-size:7.7px;line-height:9px;color:#8d9bb0;word-spacing:5.532px;">sequence number. To upsell into the next</div>
<div class="t" style="left:514.80px;top:459px;font-size:7.7px;line-height:9px;color:#8d9bb0;word-spacing:2.305px;">sequenced room type, enter your desired price</div>
<div class="t" style="left:514.80px;top:468px;font-size:7.7px;line-height:9px;color:#8d9bb0;word-spacing:2.363px;">difference between the lowest sequenced room</div>
<div class="t" style="left:514.80px;top:477px;font-size:7.7px;line-height:9px;color:#8d9bb0;transform:scale(0.9915,1.0);transform-origin:0 7px;">type and the targeted one.</div>
<div class="t" style="left:714.30px;top:201px;font-size:10.8px;line-height:12px;color:#29578b;font-weight:bold;transform:scale(0.9969,1.0);transform-origin:0 10px;">Hurdle Steps</div>
<div class="r" style="left:714.30px;top:213.30px;width:157.00px;height:1.00px;background:#dde4ee"></div>
<div class="t" style="left:713.90px;top:220px;font-size:9.3px;line-height:10px;color:#000;transform:scale(0.9730,1.0);transform-origin:0 8px;">Hurdle Steps</div>
<div class="r" style="left:775.10px;top:216.90px;width:24.90px;height:13.40px;border:1px solid #cfcfcf;border-top:1.5px solid #444;border-left:1.5px solid #444;box-sizing:border-box;background:#fff"></div>
<div class="r" style="left:808.00px;top:217.30px;width:62.50px;height:13.30px;border:1px solid #a9b3be;background:#fff;border-radius:6.6px;box-sizing:border-box"></div>
<div class="t" style="left:815.50px;top:219px;font-size:9.3px;line-height:10px;color:#a7a7a7;transform:scale(0.9778,1.0);transform-origin:0 8px;">Recalculate</div>
<div class="r" style="left:714.30px;top:240.10px;width:93.00px;height:344.20px;border:1px solid #d9e0ea;box-sizing:border-box"></div>
<div class="r" style="left:716.50px;top:241.40px;width:33.00px;height:13.00px;border:1px solid #a9b3be;background:#fff;border-radius:6.5px;box-sizing:border-box"></div>
<div class="t" style="left:722.50px;top:243px;font-size:9.3px;line-height:10px;color:#a7a7a7;transform:scale(0.9904,1.0);transform-origin:0 8px;"><u>S</u>ave</div>
<div class="r" style="left:715.30px;top:255.90px;width:91.00px;height:13.00px;background:#c9d9ec"></div>
<div class="t" style="left:751.40px;top:257px;font-size:9.4px;line-height:11px;color:#2c5a8c;font-weight:bold;transform:scale(1.0394,1.0);transform-origin:0 9px;">Hurdle Step</div>
<div class="r" style="left:715.30px;top:287.00px;width:91.00px;height:1.00px;background:#cbd6e6"></div>
<div class="r" style="left:750.20px;top:271.10px;width:54.10px;height:13.40px;border:1px solid #d8d8d8;border-top:1.6px solid #3c3c3c;border-left:1.6px solid #3c3c3c;box-sizing:border-box;background:#fff"></div>
<div class="t" style="left:802.80px;top:274px;font-size:9.3px;line-height:10px;color:#767676;margin-left:-15.52px;">194</div>
<div class="r" style="left:715.30px;top:305.70px;width:91.00px;height:1.00px;background:#cbd6e6"></div>
<div class="r" style="left:750.20px;top:289.80px;width:54.10px;height:13.40px;border:1px solid #d8d8d8;border-top:1.6px solid #3c3c3c;border-left:1.6px solid #3c3c3c;box-sizing:border-box;background:#fff"></div>
<div class="t" style="left:802.80px;top:293px;font-size:9.3px;line-height:10px;color:#767676;margin-left:-15.52px;">421</div>
<div class="r" style="left:715.30px;top:324.40px;width:91.00px;height:1.00px;background:#cbd6e6"></div>
<div class="r" style="left:750.20px;top:308.50px;width:54.10px;height:13.40px;border:1px solid #d8d8d8;border-top:1.6px solid #3c3c3c;border-left:1.6px solid #3c3c3c;box-sizing:border-box;background:#fff"></div>
<div class="t" style="left:802.80px;top:312px;font-size:9.3px;line-height:10px;color:#767676;margin-left:-15.52px;">501</div>
<div class="r" style="left:715.30px;top:343.10px;width:91.00px;height:1.00px;background:#cbd6e6"></div>
<div class="r" style="left:750.20px;top:327.20px;width:54.10px;height:13.40px;border:1px solid #d8d8d8;border-top:1.6px solid #3c3c3c;border-left:1.6px solid #3c3c3c;box-sizing:border-box;background:#fff"></div>
<div class="t" style="left:802.80px;top:330px;font-size:9.3px;line-height:10px;color:#767676;margin-left:-15.52px;">526</div>
<div class="r" style="left:715.30px;top:361.80px;width:91.00px;height:1.00px;background:#cbd6e6"></div>
<div class="r" style="left:750.20px;top:345.90px;width:54.10px;height:13.40px;border:1px solid #d8d8d8;border-top:1.6px solid #3c3c3c;border-left:1.6px solid #3c3c3c;box-sizing:border-box;background:#fff"></div>
<div class="t" style="left:802.80px;top:349px;font-size:9.3px;line-height:10px;color:#767676;margin-left:-15.52px;">566</div>
<div class="r" style="left:715.30px;top:380.50px;width:91.00px;height:1.00px;background:#cbd6e6"></div>
<div class="r" style="left:750.20px;top:364.60px;width:54.10px;height:13.40px;border:1px solid #d8d8d8;border-top:1.6px solid #3c3c3c;border-left:1.6px solid #3c3c3c;box-sizing:border-box;background:#fff"></div>
<div class="t" style="left:802.80px;top:368px;font-size:9.3px;line-height:10px;color:#767676;margin-left:-15.52px;">601</div>
<div class="r" style="left:715.30px;top:399.20px;width:91.00px;height:1.00px;background:#cbd6e6"></div>
<div class="r" style="left:750.20px;top:383.30px;width:54.10px;height:13.40px;border:1px solid #d8d8d8;border-top:1.6px solid #3c3c3c;border-left:1.6px solid #3c3c3c;box-sizing:border-box;background:#fff"></div>
<div class="t" style="left:802.80px;top:386px;font-size:9.3px;line-height:10px;color:#767676;margin-left:-15.52px;">651</div>
<div class="r" style="left:715.30px;top:417.90px;width:91.00px;height:1.00px;background:#cbd6e6"></div>
<div class="r" style="left:750.20px;top:402.00px;width:54.10px;height:13.40px;border:1px solid #d8d8d8;border-top:1.6px solid #3c3c3c;border-left:1.6px solid #3c3c3c;box-sizing:border-box;background:#fff"></div>
<div class="t" style="left:802.80px;top:405px;font-size:9.3px;line-height:10px;color:#767676;margin-left:-15.52px;">701</div>
<div class="r" style="left:715.30px;top:436.60px;width:91.00px;height:1.00px;background:#cbd6e6"></div>
<div class="r" style="left:750.20px;top:420.70px;width:54.10px;height:13.40px;border:1px solid #d8d8d8;border-top:1.6px solid #3c3c3c;border-left:1.6px solid #3c3c3c;box-sizing:border-box;background:#fff"></div>
<div class="t" style="left:802.80px;top:424px;font-size:9.3px;line-height:10px;color:#767676;margin-left:-15.52px;">751</div>
<div class="r" style="left:715.30px;top:455.30px;width:91.00px;height:1.00px;background:#cbd6e6"></div>
<div class="r" style="left:750.20px;top:439.40px;width:54.10px;height:13.40px;border:1px solid #d8d8d8;border-top:1.6px solid #3c3c3c;border-left:1.6px solid #3c3c3c;box-sizing:border-box;background:#fff"></div>
<div class="t" style="left:802.80px;top:443px;font-size:9.3px;line-height:10px;color:#767676;margin-left:-15.52px;">826</div>
<div class="r" style="left:715.30px;top:474.00px;width:91.00px;height:1.00px;background:#cbd6e6"></div>
<div class="r" style="left:750.20px;top:458.10px;width:54.10px;height:13.40px;border:1px solid #d8d8d8;border-top:1.6px solid #3c3c3c;border-left:1.6px solid #3c3c3c;box-sizing:border-box;background:#fff"></div>
<div class="t" style="left:802.80px;top:461px;font-size:9.3px;line-height:10px;color:#767676;margin-left:-15.52px;">876</div>
<div class="r" style="left:715.30px;top:492.70px;width:91.00px;height:1.00px;background:#cbd6e6"></div>
<div class="r" style="left:750.20px;top:476.80px;width:54.10px;height:13.40px;border:1px solid #d8d8d8;border-top:1.6px solid #3c3c3c;border-left:1.6px solid #3c3c3c;box-sizing:border-box;background:#fff"></div>
<div class="t" style="left:802.80px;top:480px;font-size:9.3px;line-height:10px;color:#767676;margin-left:-15.52px;">926</div>
<div class="r" style="left:715.30px;top:511.40px;width:91.00px;height:1.00px;background:#cbd6e6"></div>
<div class="r" style="left:750.20px;top:495.50px;width:54.10px;height:13.40px;border:1px solid #d8d8d8;border-top:1.6px solid #3c3c3c;border-left:1.6px solid #3c3c3c;box-sizing:border-box;background:#fff"></div>
<div class="t" style="left:802.80px;top:499px;font-size:9.3px;line-height:10px;color:#767676;margin-left:-15.52px;">976</div>
<div class="r" style="left:715.30px;top:530.10px;width:91.00px;height:1.00px;background:#cbd6e6"></div>
<div class="r" style="left:750.20px;top:514.20px;width:54.10px;height:13.40px;border:1px solid #d8d8d8;border-top:1.6px solid #3c3c3c;border-left:1.6px solid #3c3c3c;box-sizing:border-box;background:#fff"></div>
<div class="t" style="left:802.80px;top:517px;font-size:9.3px;line-height:10px;color:#767676;margin-left:-20.69px;">1001</div>
<div class="r" style="left:715.30px;top:548.80px;width:91.00px;height:1.00px;background:#cbd6e6"></div>
<div class="r" style="left:750.20px;top:532.90px;width:54.10px;height:13.40px;border:1px solid #d8d8d8;border-top:1.6px solid #3c3c3c;border-left:1.6px solid #3c3c3c;box-sizing:border-box;background:#fff"></div>
<div class="t" style="left:802.80px;top:536px;font-size:9.3px;line-height:10px;color:#767676;margin-left:-20.00px;">1176</div>
<div class="r" style="left:715.30px;top:567.50px;width:91.00px;height:1.00px;background:#9a9ea6"></div>
<div class="r" style="left:750.20px;top:551.60px;width:54.10px;height:13.40px;border:1px solid #d8d8d8;border-top:1.6px solid #3c3c3c;border-left:1.6px solid #3c3c3c;box-sizing:border-box;background:#fff"></div>
<div class="t" style="left:802.80px;top:555px;font-size:9.3px;line-height:10px;color:#767676;margin-left:-20.69px;">1601</div>
<div class="r" style="left:714.30px;top:255.90px;width:93.00px;height:312.60px;border:1px solid #a6aeba;border-top:none;box-sizing:border-box"></div>
<div class="r" style="left:716.10px;top:569.90px;width:33.50px;height:12.80px;border:1px solid #a9b3be;background:#fff;border-radius:6.4px;box-sizing:border-box"></div>
<div class="t" style="left:722.50px;top:572px;font-size:9.3px;line-height:10px;color:#a7a7a7;transform:scale(0.9904,1.0);transform-origin:0 8px;"><u>S</u>ave</div>
<div class="r" style="left:12.40px;top:591.00px;width:944.60px;height:1.00px;background:#dfe5ee"></div>
<div class="t" style="left:12.70px;top:624px;font-size:7.3px;line-height:9px;color:#000;">Version 5.0, Service Pack 5.0.01.03</div>
<div class="t" style="left:265.20px;top:614px;font-size:8.8px;line-height:10px;color:#3d5f8f;text-decoration:underline;transform:scale(1.0141,1.0);transform-origin:0 8px;">Home</div>
<div class="r" style="left:296.80px;top:614.50px;width:1.10px;height:9.00px;background:#5e2f3e"></div>
<div class="t" style="left:304.50px;top:614px;font-size:8.8px;line-height:10px;color:#3d5f8f;text-decoration:underline;transform:scale(0.9980,1.0);transform-origin:0 8px;">Forecast Analysis</div>
<div class="r" style="left:380.70px;top:614.50px;width:1.10px;height:9.00px;background:#5e2f3e"></div>
<div class="t" style="left:389.10px;top:614px;font-size:8.8px;line-height:10px;color:#3d5f8f;text-decoration:underline;transform:scale(0.9945,1.0);transform-origin:0 8px;">Groups</div>
<div class="r" style="left:425.20px;top:614.50px;width:1.10px;height:9.00px;background:#5e2f3e"></div>
<div class="t" style="left:433.20px;top:614px;font-size:8.8px;line-height:10px;color:#3d5f8f;text-decoration:underline;transform:scale(1.0340,1.0);transform-origin:0 8px;">Recommendation</div>
<div class="r" style="left:511.50px;top:614.50px;width:1.10px;height:9.00px;background:#5e2f3e"></div>
<div class="t" style="left:520.30px;top:614px;font-size:8.8px;line-height:10px;color:#3d5f8f;text-decoration:underline;transform:scale(1.0387,1.0);transform-origin:0 8px;">Rate Shopper</div>
<div class="r" style="left:584.10px;top:614.50px;width:1.10px;height:9.00px;background:#5e2f3e"></div>
<div class="t" style="left:592.00px;top:614px;font-size:8.8px;line-height:10px;color:#3d5f8f;text-decoration:underline;transform:scale(1.0320,1.0);transform-origin:0 8px;">Reports</div>
<div class="r" style="left:630.70px;top:614.50px;width:1.10px;height:9.00px;background:#5e2f3e"></div>
<div class="t" style="left:639.60px;top:613px;font-size:9.6px;line-height:11px;color:#14145a;font-weight:bold;text-decoration:underline;transform:scale(1.0049,1.0);transform-origin:0 9px;">Configuration</div>
<div class="t" style="left:756.10px;top:624px;font-size:7.3px;line-height:9px;color:#000;transform:scale(1.0146,1.0);transform-origin:0 7px;">&copy; 2007,2008,2009 MICROS Systems, Inc. All rights reserved</div>
<div class="r" style="left:0;top:0;width:970px;height:643px;box-sizing:border-box;border:2px solid #000"></div>
</body></html>
